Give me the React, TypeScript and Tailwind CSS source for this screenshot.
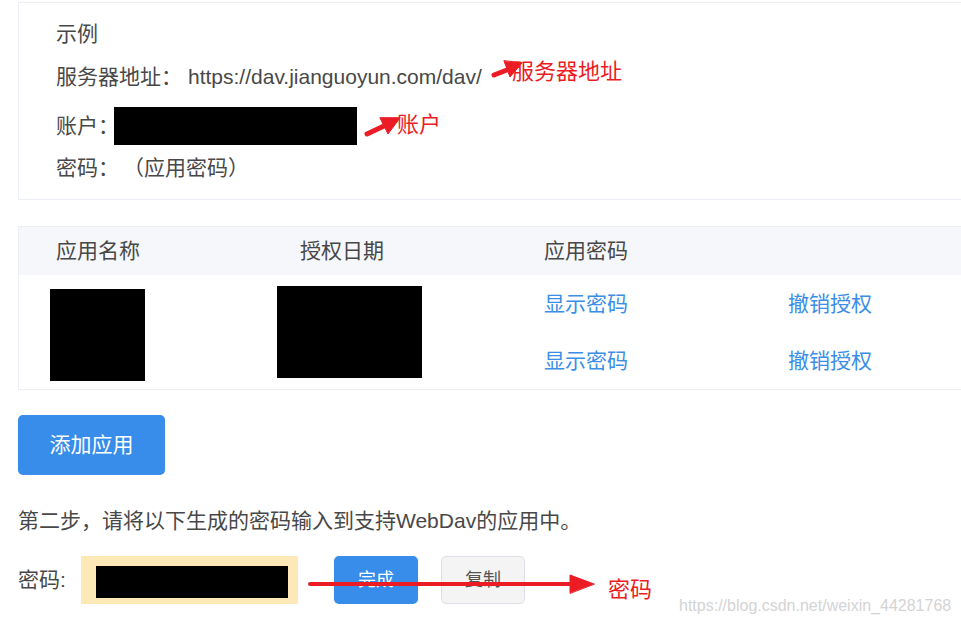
import React from "react";

export default function App() {
  return (
    <div className="relative w-[961px] h-[624px] overflow-hidden bg-white text-[#484848] text-[21px] font-['Liberation_Sans','Noto_Sans_CJK_SC',sans-serif]">
      <div className="pl-[18px] pt-[2px]">
        {/* Example box */}
        <div className="w-[960px] border border-[#ebeef5] pl-[37px] pt-[17px] pb-[17px] flex flex-col">
          <div className="h-[28px] leading-[28px] flex items-center">示例</div>
          <div className="mt-[15px] h-[28px] leading-[28px] flex items-center">
            <span>服务器地址：</span>
            <span className="ml-[6px]">https://dav.jianguoyun.com/dav/</span>
          </div>
          <div className="mt-[16px] h-[38px] flex items-center">
            <span className="leading-[28px]">账户：</span>
            <div className="ml-[-5px] w-[243px] h-[38px] bg-black" />
          </div>
          <div className="mt-[9px] h-[28px] leading-[28px] flex items-center">
            <span>密码：</span>
            <span className="ml-[4px]">（应用密码）</span>
          </div>
        </div>

        {/* Table */}
        <div className="mt-[26px] w-[960px] border border-[#ebeef5]">
          <div className="h-[48px] bg-[#f5f7fa] flex items-center">
            <div className="w-[244px] pl-[37px]">应用名称</div>
            <div className="w-[244px] pl-[37px]">授权日期</div>
            <div className="w-[244px] pl-[37px]">应用密码</div>
          </div>
          <div className="grid grid-cols-[244px_244px_244px_1fr] grid-rows-[57px_57px]">
            <div className="row-span-2 pl-[31px] pt-[14px]">
              <div className="w-[95px] h-[92px] bg-black" />
            </div>
            <div className="row-span-2 pl-[14px] pt-[11px]">
              <div className="w-[145px] h-[92px] bg-black" />
            </div>
            <div className="pl-[37px] flex items-center text-[#3a8ee6]">显示密码</div>
            <div className="pl-[37px] flex items-center text-[#3a8ee6]">撤销授权</div>
            <div className="pl-[37px] flex items-center text-[#3a8ee6]">显示密码</div>
            <div className="pl-[37px] flex items-center text-[#3a8ee6]">撤销授权</div>
          </div>
        </div>

        {/* Add button */}
        <button className="mt-[25px] w-[147px] h-[60px] rounded-[5px] bg-[#378de9] text-white text-[21px] flex items-center justify-center">
          添加应用
        </button>

        <div className="mt-[32px] h-[28px] leading-[28px]">
          第二步，请将以下生成的密码输入到支持WebDav的应用中。
        </div>

        <div className="mt-[21px] h-[48px] flex items-center">
          <div className="w-[63px]">密码:</div>
          <div className="w-[217px] h-[48px] bg-[#fde9b7] pl-[15px] pt-[10px]">
            <div className="w-[192px] h-[32px] bg-black" />
          </div>
          <button className="ml-[36px] w-[84px] h-[48px] rounded-[5px] bg-[#378de9] text-white text-[18px] flex items-center justify-center">
            完成
          </button>
          <button className="ml-[23px] w-[84px] h-[48px] rounded-[5px] bg-[#f4f4f4] border border-[#dcdfe6] text-[#555] text-[18px] flex items-center justify-center">
            复制
          </button>
        </div>
      </div>

      {/* Annotations */}
      <svg className="absolute left-0 top-0 pointer-events-none" width="961" height="624" viewBox="0 0 961 624">
        <g fill="#ec1c24" stroke="#ec1c24" strokeLinecap="round" strokeLinejoin="round">
          <line x1="494" y1="75" x2="507" y2="70" strokeWidth="5" />
          <polygon points="522,63 510,77 504,61" strokeWidth="1" />
          <line x1="367" y1="134" x2="384" y2="126" strokeWidth="5" />
          <polygon points="400,118 388,134 380,118" strokeWidth="1" />
          <line x1="310" y1="584" x2="572" y2="584" strokeWidth="4" />
          <polygon points="594,584 570,575 570,593" strokeWidth="1" />
        </g>
      </svg>
      <span className="absolute left-[512px] top-[58px] text-[22px] leading-[22px] text-[#ec1c24] font-['Noto_Sans_CJK_SC',sans-serif]">
        服务器地址
      </span>
      <span className="absolute left-[397px] top-[111px] text-[22px] leading-[22px] text-[#ec1c24] font-['Noto_Sans_CJK_SC',sans-serif]">
        账户
      </span>
      <span className="absolute left-[608px] top-[576px] text-[22px] leading-[22px] text-[#ec1c24] font-['Noto_Sans_CJK_SC',sans-serif]">
        密码
      </span>
      <span className="absolute left-[679px] top-[597px] text-[16px] leading-[18px] text-[#d4d4d4] font-['Liberation_Sans',sans-serif]">
        https://blog.csdn.net/weixin_44281768
      </span>
    </div>
  );
}
